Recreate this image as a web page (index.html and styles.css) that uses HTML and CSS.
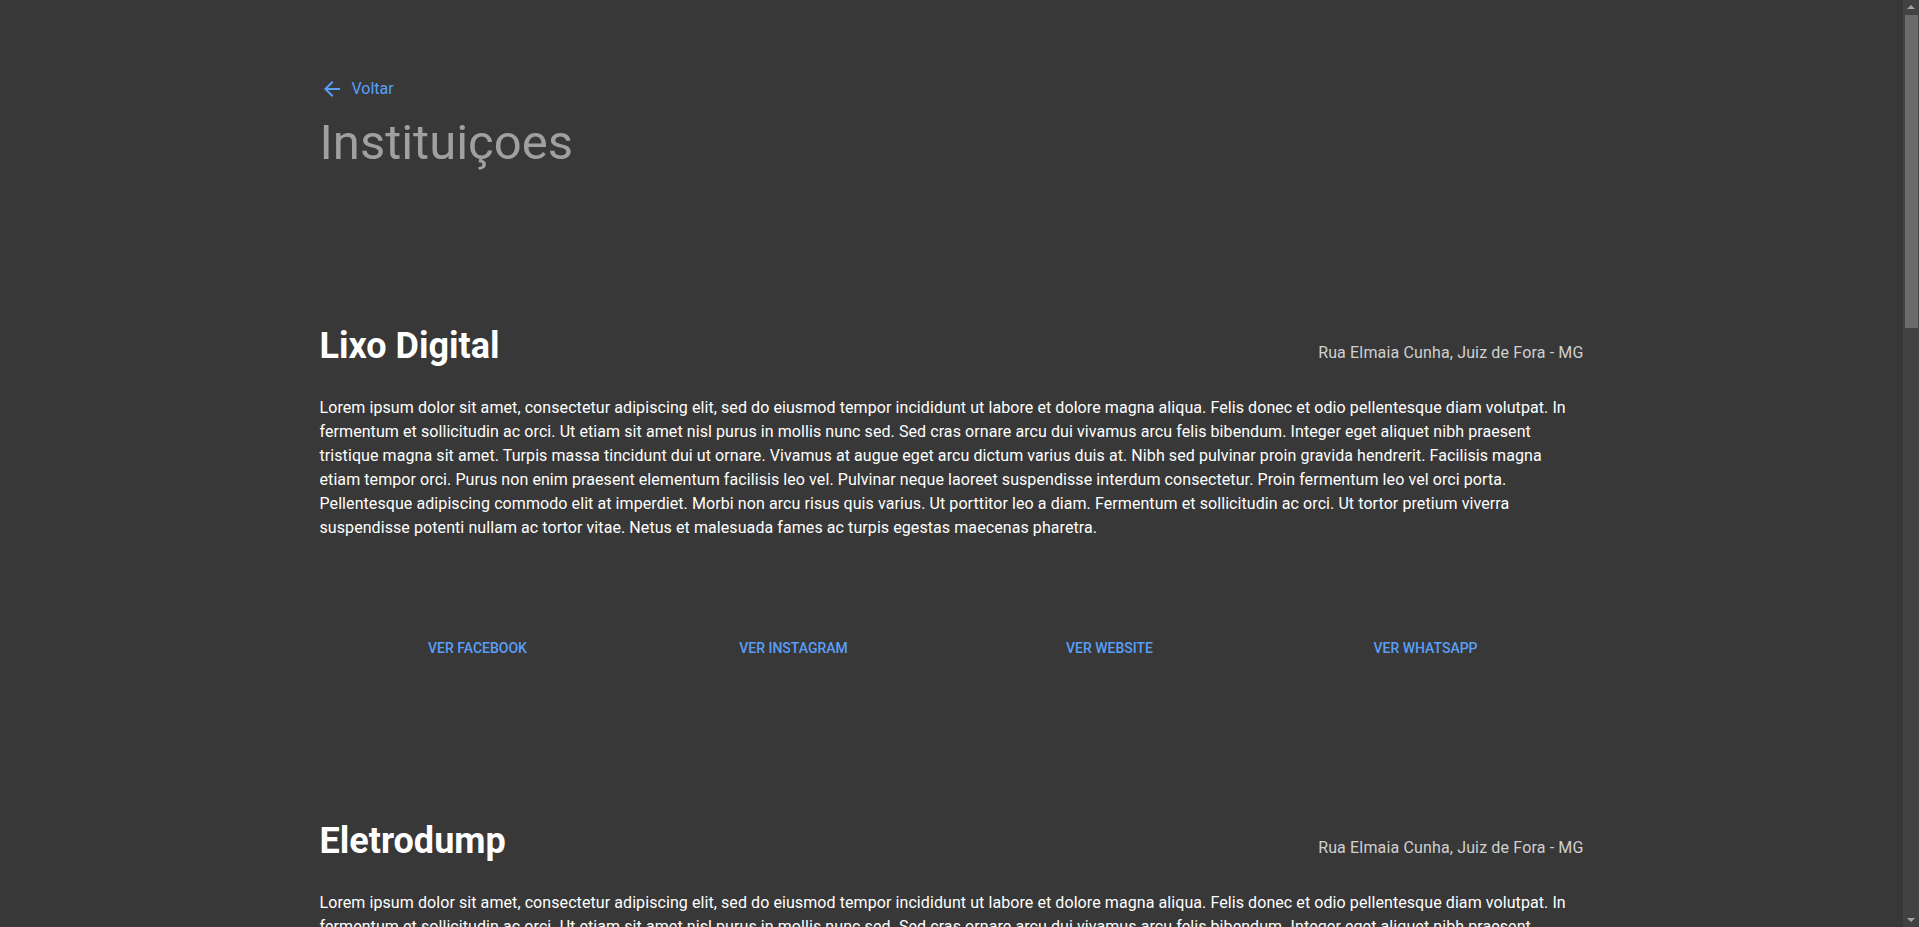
FILE: index.html
```html
<!DOCTYPE html>
<html lang="pt-BR">
<head>
<meta charset="utf-8">
<title>Instituiçoes</title>
<link rel="stylesheet" href="styles.css">
</head>
<body>
<main class="page">
  <a class="back" href="#">
    <svg class="back-icon" viewBox="0 0 24 24" width="24" height="24" aria-hidden="true"><path d="M20 11H7.83l5.59-5.59L12 4l-8 8 8 8 1.41-1.41L7.83 13H20v-2z" fill="currentColor"/></svg>
    <span>Voltar</span>
  </a>
  <h1 class="page-title">Instituiçoes</h1>

  <section class="list">
    <article class="card">
      <header class="card-head">
        <h2 class="card-title">Lixo Digital</h2>
        <span class="card-address">Rua Elmaia Cunha, Juiz de Fora - MG</span>
      </header>
      <p class="card-text">Lorem ipsum dolor sit amet, consectetur adipiscing elit, sed do eiusmod tempor incididunt ut labore et dolore magna aliqua. Felis donec et odio pellentesque diam volutpat. In fermentum et sollicitudin ac orci. Ut etiam sit amet nisl purus in mollis nunc sed. Sed cras ornare arcu dui vivamus arcu felis bibendum. Integer eget aliquet nibh praesent tristique magna sit amet. Turpis massa tincidunt dui ut ornare. Vivamus at augue eget arcu dictum varius duis at. Nibh sed pulvinar proin gravida hendrerit. Facilisis magna etiam tempor orci. Purus non enim praesent elementum facilisis leo vel. Pulvinar neque laoreet suspendisse interdum consectetur. Proin fermentum leo vel orci porta. Pellentesque adipiscing commodo elit at imperdiet. Morbi non arcu risus quis varius. Ut porttitor leo a diam. Fermentum et sollicitudin ac orci. Ut tortor pretium viverra suspendisse potenti nullam ac tortor vitae. Netus et malesuada fames ac turpis egestas maecenas pharetra.</p>
      <div class="actions">
        <a class="action" href="#">Ver Facebook</a>
        <a class="action" href="#">Ver Instagram</a>
        <a class="action" href="#">Ver Website</a>
        <a class="action" href="#">Ver Whatsapp</a>
      </div>
    </article>

    <article class="card">
      <header class="card-head">
        <h2 class="card-title">Eletrodump</h2>
        <span class="card-address">Rua Elmaia Cunha, Juiz de Fora - MG</span>
      </header>
      <p class="card-text">Lorem ipsum dolor sit amet, consectetur adipiscing elit, sed do eiusmod tempor incididunt ut labore et dolore magna aliqua. Felis donec et odio pellentesque diam volutpat. In fermentum et sollicitudin ac orci. Ut etiam sit amet nisl purus in mollis nunc sed. Sed cras ornare arcu dui vivamus arcu felis bibendum. Integer eget aliquet nibh praesent tristique magna sit amet. Turpis massa tincidunt dui ut ornare. Vivamus at augue eget arcu dictum varius duis at. Nibh sed pulvinar proin gravida hendrerit. Facilisis magna etiam tempor orci. Purus non enim praesent elementum facilisis leo vel. Pulvinar neque laoreet suspendisse interdum consectetur. Proin fermentum leo vel orci porta. Pellentesque adipiscing commodo elit at imperdiet. Morbi non arcu risus quis varius. Ut porttitor leo a diam. Fermentum et sollicitudin ac orci. Ut tortor pretium viverra suspendisse potenti nullam ac tortor vitae. Netus et malesuada fames ac turpis egestas maecenas pharetra.</p>
      <div class="actions">
        <a class="action" href="#">Ver Facebook</a>
        <a class="action" href="#">Ver Instagram</a>
        <a class="action" href="#">Ver Website</a>
        <a class="action" href="#">Ver Whatsapp</a>
      </div>
    </article>

    <article class="card">
      <header class="card-head">
        <h2 class="card-title">Recicla JF</h2>
        <span class="card-address">Rua Elmaia Cunha, Juiz de Fora - MG</span>
      </header>
      <p class="card-text">Lorem ipsum dolor sit amet, consectetur adipiscing elit, sed do eiusmod tempor incididunt ut labore et dolore magna aliqua. Felis donec et odio pellentesque diam volutpat. In fermentum et sollicitudin ac orci. Ut etiam sit amet nisl purus in mollis nunc sed. Sed cras ornare arcu dui vivamus arcu felis bibendum. Integer eget aliquet nibh praesent tristique magna sit amet. Turpis massa tincidunt dui ut ornare. Vivamus at augue eget arcu dictum varius duis at. Nibh sed pulvinar proin gravida hendrerit. Facilisis magna etiam tempor orci. Purus non enim praesent elementum facilisis leo vel. Pulvinar neque laoreet suspendisse interdum consectetur. Proin fermentum leo vel orci porta. Pellentesque adipiscing commodo elit at imperdiet. Morbi non arcu risus quis varius. Ut porttitor leo a diam. Fermentum et sollicitudin ac orci. Ut tortor pretium viverra suspendisse potenti nullam ac tortor vitae. Netus et malesuada fames ac turpis egestas maecenas pharetra.</p>
      <div class="actions">
        <a class="action" href="#">Ver Facebook</a>
        <a class="action" href="#">Ver Instagram</a>
        <a class="action" href="#">Ver Website</a>
        <a class="action" href="#">Ver Whatsapp</a>
      </div>
    </article>

    <article class="card">
      <header class="card-head">
        <h2 class="card-title">E-Lixo Minas</h2>
        <span class="card-address">Rua Elmaia Cunha, Juiz de Fora - MG</span>
      </header>
      <p class="card-text">Lorem ipsum dolor sit amet, consectetur adipiscing elit, sed do eiusmod tempor incididunt ut labore et dolore magna aliqua. Felis donec et odio pellentesque diam volutpat. In fermentum et sollicitudin ac orci. Ut etiam sit amet nisl purus in mollis nunc sed. Sed cras ornare arcu dui vivamus arcu felis bibendum. Integer eget aliquet nibh praesent tristique magna sit amet. Turpis massa tincidunt dui ut ornare. Vivamus at augue eget arcu dictum varius duis at. Nibh sed pulvinar proin gravida hendrerit. Facilisis magna etiam tempor orci. Purus non enim praesent elementum facilisis leo vel. Pulvinar neque laoreet suspendisse interdum consectetur. Proin fermentum leo vel orci porta. Pellentesque adipiscing commodo elit at imperdiet. Morbi non arcu risus quis varius. Ut porttitor leo a diam. Fermentum et sollicitudin ac orci. Ut tortor pretium viverra suspendisse potenti nullam ac tortor vitae. Netus et malesuada fames ac turpis egestas maecenas pharetra.</p>
      <div class="actions">
        <a class="action" href="#">Ver Facebook</a>
        <a class="action" href="#">Ver Instagram</a>
        <a class="action" href="#">Ver Website</a>
        <a class="action" href="#">Ver Whatsapp</a>
      </div>
    </article>

    <article class="card">
      <header class="card-head">
        <h2 class="card-title">Sucata Verde</h2>
        <span class="card-address">Rua Elmaia Cunha, Juiz de Fora - MG</span>
      </header>
      <p class="card-text">Lorem ipsum dolor sit amet, consectetur adipiscing elit, sed do eiusmod tempor incididunt ut labore et dolore magna aliqua. Felis donec et odio pellentesque diam volutpat. In fermentum et sollicitudin ac orci. Ut etiam sit amet nisl purus in mollis nunc sed. Sed cras ornare arcu dui vivamus arcu felis bibendum. Integer eget aliquet nibh praesent tristique magna sit amet. Turpis massa tincidunt dui ut ornare. Vivamus at augue eget arcu dictum varius duis at. Nibh sed pulvinar proin gravida hendrerit. Facilisis magna etiam tempor orci. Purus non enim praesent elementum facilisis leo vel. Pulvinar neque laoreet suspendisse interdum consectetur. Proin fermentum leo vel orci porta. Pellentesque adipiscing commodo elit at imperdiet. Morbi non arcu risus quis varius. Ut porttitor leo a diam. Fermentum et sollicitudin ac orci. Ut tortor pretium viverra suspendisse potenti nullam ac tortor vitae. Netus et malesuada fames ac turpis egestas maecenas pharetra.</p>
      <div class="actions">
        <a class="action" href="#">Ver Facebook</a>
        <a class="action" href="#">Ver Instagram</a>
        <a class="action" href="#">Ver Website</a>
        <a class="action" href="#">Ver Whatsapp</a>
      </div>
    </article>
  </section>
</main>
<div class="scrollbar" aria-hidden="true">
  <span class="scroll-arrow scroll-arrow-up"></span>
  <span class="scroll-thumb"></span>
  <span class="scroll-arrow scroll-arrow-down"></span>
</div>
</body>
</html>
```

FILE: styles.css
```css
html {
  background: #383838;
}

body {
  margin: 0;
  padding-right: 16px;
  background: #383838;
  color: #ffffff;
  font-family: Roboto, "Liberation Sans", Arial, sans-serif;
}

.page {
  box-sizing: border-box;
  width: 1280px;
  margin: 0 auto;
  padding: 77px 8px 0;
}

.back {
  display: inline-flex;
  align-items: center;
  gap: 8px;
  color: #5a9ff7;
  text-decoration: none;
  font-size: 16px;
  line-height: 24px;
}

.back-icon {
  display: block;
  width: 24px;
  height: 24px;
}

.page-title {
  margin: 9px 0 0;
  font-size: 49px;
  font-weight: 400;
  line-height: 57px;
  color: #a0a0a0;
}

.list {
  display: flex;
  flex-direction: column;
  padding-top: 154px;
}

.card {
  display: flex;
  flex-direction: column;
}

.card-head {
  display: flex;
  justify-content: space-between;
  align-items: baseline;
}

.card-title {
  margin: 0;
  font-size: 36px;
  font-weight: 700;
  line-height: 43px;
  color: #ffffff;
}

.card-address {
  font-size: 16px;
  letter-spacing: 0.15px;
  color: #d0d0d0;
}

.card-text {
  margin: 28px 0 0;
  font-size: 16px;
  line-height: 24px;
  letter-spacing: 0.08px;
  color: #ffffff;
}

.actions {
  display: grid;
  grid-template-columns: repeat(4, 1fr);
  margin-top: 90px;
  margin-bottom: 154px;
}

.action {
  justify-self: center;
  padding: 6px 8px;
  font-size: 14px;
  font-weight: 500;
  line-height: 24px;
  text-transform: uppercase;
  text-decoration: none;
  color: #5a9ff7;
}

.scrollbar {
  position: fixed;
  top: 0;
  right: 0;
  width: 16px;
  height: 100%;
  background: #424242;
}

.scroll-thumb {
  position: absolute;
  top: 15px;
  left: 2px;
  right: 1px;
  height: 313px;
  background: #6b6b6b;
}

.scroll-arrow {
  position: absolute;
  left: 4px;
  width: 0;
  height: 0;
  border-left: 4px solid transparent;
  border-right: 4px solid transparent;
}

.scroll-arrow-up {
  top: 5px;
  border-bottom: 4px solid #a3a3a3;
}

.scroll-arrow-down {
  bottom: 5px;
  border-top: 4px solid #a3a3a3;
}
```
